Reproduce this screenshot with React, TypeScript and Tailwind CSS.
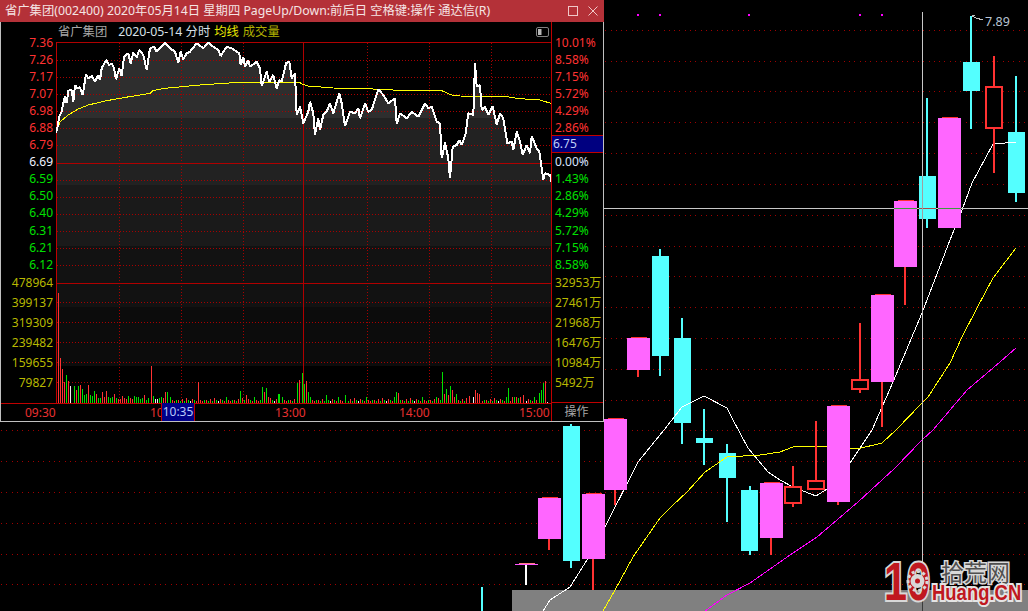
import React from "react";

type C = [number, number, number, number, number, number, number];
// xL, xR, bodyTop, bodyBottom, wickX, wickTop, wickBottom
const cyan: C[] = [
  [563, 580, 426, 561, 570, 424, 568],
  [652, 669, 256, 356, 659, 249, 376],
  [674, 691, 338, 423, 681, 318, 444],
  [696, 713, 438, 443, 703, 409, 465],
  [719, 736, 453, 478, 726, 444, 522],
  [741, 758, 490, 551, 749, 486, 555],
  [919, 936, 176, 219, 926, 98, 228],
  [963, 980, 62, 91, 970, 16, 129],
  [1008, 1025, 132, 193, 1015, 76, 202],
];
const pink: C[] = [
  [538, 561, 498, 539, 548, 497, 550],
  [582, 605, 494, 559, 592, 493, 590],
  [604, 627, 419, 490, 614, 418, 505],
  [627, 650, 338, 370, 637, 337, 377],
  [760, 783, 483, 538, 770, 482, 555],
  [827, 850, 406, 502, 837, 405, 505],
  [871, 894, 295, 382, 881, 294, 427],
  [894, 917, 201, 267, 904, 200, 305],
  [938, 961, 118, 228, 948, 117, 228],
];
const hollow: C[] = [
  [785, 801, 487, 503, 792, 466, 507],
  [808, 824, 481, 489, 815, 421, 490],
  [852, 868, 380, 389, 859, 323, 393],
  [986, 1002, 87, 128, 993, 56, 173],
];
const gridYs = [30, 61, 91, 122, 153, 184, 215, 246, 276, 307, 338, 369, 400, 430, 461, 492, 523, 554, 584];
const maWhite = "543,611 550,600 570,587 587,560 605,527 638,462 664,430 682,407 704,396 727,408 733,420 748,448 768,472 780,480 793,487 816,496 827,489 850,463 872,430 893,382 922,313 950,240 962,210 972,183 993,144 1005,143 1016,142";
const maYellow = "603,611 615,590 633,557 660,518 672,506 687,492 705,472 727,457 760,455 780,452 793,447 817,446 850,448 857,449 882,443 896,430 922,403 928,397 950,363 962,337 977,308 993,278 1016,248";
const maPurple = "705,611 727,595 750,583 780,562 793,553 817,537 858,502 895,468 922,440 933,430 967,390 993,368 1016,348";

const priceLeft: [number, number][] = [[168,398],[172,385],[178,350],[185,335],[190,310],[195,290],[200,310],[205,272],[215,270],[220,305],[225,255],[232,265],[240,262],[248,285],[258,222],[265,235],[275,228],[285,245],[295,225],[300,240],[305,205],[318,180],[328,195],[335,190],[342,205],[348,238],[358,205],[365,228],[372,170],[385,160],[392,190],[400,158],[410,172],[418,150],[430,165],[440,210],[450,145],[462,140],[470,155],[480,145],[495,128],[510,145],[525,155],[535,188],[542,155],[550,178],[560,160],[570,155],[590,130],[610,145],[625,128],[640,140],[655,150],[662,168],[680,140],[695,145],[718,160],[722,195],[730,172],[735,200],[745,180],[750,200],[770,185],[780,205],[785,258],[800,215],[808,245],[820,225],[830,265],[838,240],[845,245],[858,190],[868,185],[875,235],[885,220],[890,345],[900,320]];
const priceRight: [number, number][] = [[10,370],[25,335],[30,305],[40,340],[45,405],[55,355],[60,390],[70,345],[80,335],[90,310],[100,340],[118,280],[125,310],[135,378],[150,335],[165,340],[175,325],[180,355],[195,310],[205,335],[215,330],[235,268],[250,285],[265,310],[285,295],[290,372],[300,340],[320,355],[335,335],[355,350],[375,310],[385,325],[395,320],[410,365],[420,370],[425,475],[435,428],[445,475],[450,535],[458,440],[470,435],[478,420],[485,435],[497,400],[505,340],[520,345],[525,190],[530,260],[540,255],[545,330],[555,320],[565,345],[578,318],[590,375],[600,340],[610,355],[622,430],[635,425],[640,450],[650,395],[660,425],[668,465],[680,435],[690,460],[695,408],[710,445],[718,455],[730,540],[735,520],[750,525],[755,548]];
const pricePts = [
  ...priceLeft.map(([x, y]) => [x / 3, y / 3]),
  ...priceRight.map(([x, y]) => [300 + x / 3, y / 3]),
].map(([x, y]) => `${x.toFixed(1)},${y.toFixed(1)}`).join(" ");
const avgPts = [
  ...[[168,398],[180,365],[205,345],[235,327],[265,315],[320,302],[370,293],[450,280],[458,272],[495,265],[600,255],[718,247],[900,247]].map(([x, y]) => [x / 3, y / 3]),
  ...[[0,250],[25,258],[100,264],[200,266],[320,272],[425,272],[455,285],[480,288],[620,290],[660,296],[720,300],[752,310]].map(([x, y]) => [300 + x / 3, y / 3]),
].map(([x, y]) => `${x.toFixed(1)},${y.toFixed(1)}`).join(" ");

const RED = "#ff3232";
const GREEN = "#00e000";
const WHITE = "#f0f0f0";
const colorOf: Record<string, string> = { r: RED, g: GREEN, w: WHITE };

const earlyH = [110,45,34,21,28,22,17,0,17,13,17,18,14,8,9,18,8,7,12,9,5,5,11,6,12,6,5,6,9,5,4,4,7,5,4,7,5,4,7,6,6,4,5,8,3,5];
const earlyC = "rrrrgrwggrgrgggrgggrggrrrgggrgrrrrrgrrgggggrgg";
const spikes: [number, number, string][] = [
  [151,37,"r"],[153,7,"g"],[155,4,"w"],[157,4,"w"],[159,5,"g"],[161,6,"g"],[163,5,"r"],[165,11,"r"],[167,11,"g"],[198,21,"r"],
  [240,12,"g"],[246,8,"r"],[262,16,"g"],[264,11,"r"],[266,15,"g"],[268,6,"r"],[278,9,"g"],[279,9,"g"],[297,20,"g"],[299,23,"r"],
  [302,30,"g"],[304,19,"g"],[306,22,"r"],[308,11,"g"],[326,8,"g"],[345,8,"g"],[396,11,"g"],[398,10,"r"],[436,6,"g"],[442,31,"g"],
  [444,9,"r"],[446,14,"g"],[448,8,"r"],[450,17,"g"],[452,13,"r"],[454,6,"r"],[456,9,"g"],[469,7,"r"],[473,6,"w"],[475,13,"r"],[477,10,"r"],[479,9,"r"],
  [508,15,"g"],[512,6,"r"],[514,6,"g"],[516,6,"r"],[518,5,"g"],[520,6,"r"],[523,8,"r"],[539,10,"g"],[541,13,"g"],[543,20,"g"],[545,22,"r"],[547,1,"w"],[551,31,"w"],
];
const bars: { x: number; h: number; c: string }[] = [];
earlyH.forEach((h, i) => bars.push({ x: 58 + i * 2, h, c: colorOf[earlyC[i]] }));
const lowPat = [3, 2, 4, 2, 5, 3, 2, 4, 3, 2, 6, 3, 2, 3];
const colPat = "rgrgrgwrgrgrrg";
for (let x = 150, i = 0; x < 550; x += 2, i++) {
  if (spikes.some(([sx]) => Math.abs(sx - x) < 2)) continue;
  bars.push({ x, h: lowPat[i % 14], c: colorOf[colPat[i % 14]] });
}
spikes.forEach(([x, h, c]) => bars.push({ x, h, c: colorOf[c] }));

const hGrid = [60, 77, 94, 111, 128, 145, 180, 197, 214, 231, 248, 265, 302, 322, 342, 362, 382];
const vGrid = [119, 181, 243, 367, 429, 491];
const bands: [number, number, string][] = [
  [42, 76, "#2e2e2e"],
  [118, 67, "#222222"],
  [185, 61, "#1a1a1a"],
  [246, 61, "#121212"],
  [307, 59, "#0c0c0c"],
];

const priceLabels: [string, string][] = [
  ["7.36", RED],["7.26", RED],["7.17", RED],["7.07", RED],["6.98", RED],["6.88", RED],["6.79", RED],
  ["6.69", "#eef2ff"],
  ["6.59", GREEN],["6.50", GREEN],["6.40", GREEN],["6.31", GREEN],["6.21", GREEN],["6.12", GREEN],
];
const pctLabels: [string, string][] = [
  ["10.01%", RED],["8.58%", RED],["7.15%", RED],["5.72%", RED],["4.29%", RED],["2.86%", RED],["", RED],
  ["0.00%", "#d8e4ff"],
  ["1.43%", GREEN],["2.86%", GREEN],["4.29%", GREEN],["5.72%", GREEN],["7.15%", GREEN],["8.58%", GREEN],
];
const volLeft = ["478964", "399137", "319309", "239482", "159655", "79827"];
const volRight = ["32953万", "27461万", "21968万", "16476万", "10984万", "5492万"];

function Chart() {
  return (
    <svg className="absolute inset-0" width={1028} height={611} viewBox="0 0 1028 611">
      <g shapeRendering="crispEdges">
        {gridYs.map((y) => (
          <line key={y} x1={1} x2={1028} y1={y + 0.5} y2={y + 0.5} stroke="#a00000" strokeDasharray="1 4.3" />
        ))}
        {[638, 660, 749, 860, 882].map((x) => (
          <rect key={x} x={x - 1} y={14} width={2} height={2} fill="#ff00ff" />
        ))}
        <rect x={512} y={590} width={516} height={21} fill="#808080" />
        <rect x={481} y={587} width={2} height={24} fill="#54ffff" />
        {cyan.map(([l, r, t, b, wx, wt, wb]) => (
          <g key={l}>
            <rect x={wx} y={wt} width={2} height={wb - wt} fill="#54ffff" />
            <rect x={l} y={t} width={r - l} height={b - t} fill="#54ffff" />
          </g>
        ))}
        <rect x={525} y={564} width={2} height={21} fill="#ffffff" />
        <g fill="none" strokeWidth={1}>
          <polyline points={maWhite} stroke="#ffffff" />
          <polyline points={maYellow} stroke="#ffff00" />
          <polyline points={maPurple} stroke="#ff00ff" />
        </g>
        <rect x={515} y={564} width={23} height={1} fill="#ff54ff" />
        <rect x={519} y={563} width={16} height={1} fill="#ff8080" />
        {pink.map(([l, r, t, b, wx, wt, wb]) => (
          <g key={l}>
            <rect x={wx} y={wt} width={2} height={wb - wt} fill="#ff3232" />
            <rect x={l + 4} y={t - 1} width={r - l - 7} height={1} fill="#ff3232" />
            <rect x={l} y={t} width={r - l} height={b - t} fill="#ff66ff" />
          </g>
        ))}
        {hollow.map(([l, r, t, b, wx, wt, wb]) => (
          <g key={l}>
            <rect x={wx} y={wt} width={2} height={t - wt} fill="#ff3232" />
            <rect x={wx} y={b} width={2} height={wb - b} fill="#ff3232" />
            <rect x={l} y={t} width={r - l} height={b - t} fill="#000" stroke="#ff3232" strokeWidth={2} />
          </g>
        ))}
        <rect x={603} y={208} width={425} height={1} fill="#c8c8c8" />
        <rect x={894} y={208} width={23} height={1} fill="#3f9a3f" />
        <rect x={938} y={208} width={23} height={1} fill="#3f9a3f" />
        <rect x={919} y={208} width={17} height={1} fill="#a84a4a" />
        <rect x={922} y={12} width={1} height={578} fill="#c8c8c8" />
        <rect x={922} y={176} width={1} height={43} fill="#a0a0a0" />
        <rect x={922} y={590} width={1} height={21} fill="#3a3a3a" />
        <polyline points="972,16 976,18 983,20" fill="none" stroke="#c0c0c0" strokeWidth={1} />
        <polyline points="972,15 975,15" fill="none" stroke="#c0c0c0" strokeWidth={1} />
      </g>
      <text x={985} y={26} fontSize={12.5} fill="#b8c4d4" fontFamily="'Noto Sans', sans-serif">7.89</text>
    </svg>
  );
}

function Plot() {
  return (
    <svg width={495} height={361} viewBox="56 42 495 361" className="block shrink-0">
      <defs>
        <clipPath id="under">
          <polygon points={`${pricePts} 551,182 551,403 56,403`} />
        </clipPath>
      </defs>
      <g clipPath="url(#under)" shapeRendering="crispEdges">
        {bands.map(([y, h, c]) => (
          <rect key={y} x={56} y={y} width={495} height={h} fill={c} />
        ))}
      </g>
      <g shapeRendering="crispEdges">
        {hGrid.map((y) => (
          <line key={y} x1={57} x2={551} y1={y + 0.5} y2={y + 0.5} stroke="#a80000" strokeDasharray="1 2" />
        ))}
        {vGrid.map((x) => (
          <line key={x} x1={x + 0.5} x2={x + 0.5} y1={43} y2={403} stroke="#a80000" strokeDasharray="1 2" />
        ))}
        <rect x={56} y={42} width={495} height={1} fill="#b00000" />
        <rect x={56} y={163} width={495} height={1} fill="#b00000" />
        <rect x={56} y={283} width={495} height={1} fill="#b00000" />
        <rect x={56} y={42} width={1} height={361} fill="#c00000" />
        <rect x={303} y={42} width={1} height={361} fill="#b00000" />
        {bars.map((b, i) => (
          <rect key={i} x={b.x} y={403 - b.h} width={1} height={b.h} fill={b.c} />
        ))}
        <polyline points={avgPts} fill="none" stroke="#ffff00" strokeWidth={1} />
        <polyline points={pricePts} fill="none" stroke="#ffffff" strokeWidth={2} strokeLinejoin="bevel" />
      </g>
    </svg>
  );
}

function Watermark() {
  return (
    <svg className="absolute left-[880px] top-[550px]" width={148} height={61} viewBox="880 550 148 61">
      <text transform="translate(884,600) scale(0.78,1)" fontFamily="'Liberation Sans', sans-serif" fontWeight={700} fontSize={53} fill="#c01820" stroke="#d8d8d8" strokeWidth={4} paintOrder="stroke">10</text>
      <circle cx={917.5} cy={581} r={7} fill="#d8d8d8" />
      <circle cx={917.5} cy={581} r={9.5} fill="none" stroke="#d8d8d8" strokeWidth={3} strokeDasharray="3 2.5" />
      <circle cx={917.5} cy={581} r={2.5} fill="#c01820" />
      <text x={941} y={581} fontSize={23} fontWeight={400} fill="#505050" stroke="#d8d8d8" strokeWidth={3} paintOrder="stroke" fontFamily="'Noto Sans CJK SC', sans-serif">拾荒网</text>
      <text transform="translate(932,600) scale(0.84,1)" fontSize={22} fontWeight={700} fill="#c01820" stroke="#e4e4e4" strokeWidth={4} paintOrder="stroke" fontFamily="'Liberation Sans', sans-serif">Huang.CN</text>
    </svg>
  );
}

function Popup() {
  return (
    <div className="absolute left-0 top-0 flex h-[422px] w-[604px] flex-col border-b border-l border-r border-[#c0c0c0] border-t-0 bg-black">
      <div className="relative -mx-px flex h-[22px] shrink-0 items-center justify-between bg-[#b43138] pl-[5px] pr-[6px] text-[12.3px] text-[#f4e4e4]">
        <span className="whitespace-nowrap">省广集团(002400) 2020年05月14日 星期四 PageUp/Down:前后日 空格键:操作 通达信(R)</span>
        <div className="flex items-center gap-[10px]">
          <svg width={10} height={10} viewBox="0 0 10 10">
            <rect x={0.5} y={0.5} width={9} height={9} fill="none" stroke="#f0c8c8" />
          </svg>
          <svg width={10} height={10} viewBox="0 0 10 10">
            <path d="M0.5 0.5L9.5 9.5M9.5 0.5L0.5 9.5" fill="none" stroke="#f0c8c8" />
          </svg>
        </div>
      </div>
      <div className="flex min-h-0 flex-1">
        <div className="relative flex w-[550px] shrink-0 flex-col">
          <div className="flex h-[20px] shrink-0 items-center gap-[4px] pl-[57px] text-[12.3px] leading-none">
            <span className="mr-[7px] text-[#a8a8a8]">省广集团</span>
            <span className="text-[#d8e0e8]">2020-05-14 分时</span>
            <span className="text-[#e8e800]">均线</span>
            <span className="text-[#b0b000]">成交量</span>
          </div>
          <div className="flex h-[361px] shrink-0">
            <div className="-mt-[8px] flex w-[55px] shrink-0 flex-col pr-[3px] text-right text-[12px] leading-none">
              {priceLabels.map(([t, c]) => (
                <div key={t} className="flex h-[17.1px] items-center justify-end" style={{ color: c }}>{t}</div>
              ))}
              {volLeft.map((t) => (
                <div key={t} className="flex h-[20px] items-center justify-end text-[#b8b800]">{t}</div>
              ))}
            </div>
            <Plot />
          </div>
          <div className="relative flex h-[18px] shrink-0 items-center border-t border-[#c00000] pl-[24px] text-[12px] leading-none text-[#e83030]">
            <span className="w-[125px] shrink-0">09:30</span>
            <span className="w-[125px] shrink-0">10:30</span>
            <span className="w-[124px] shrink-0">13:00</span>
            <span className="w-[120px] shrink-0">14:00</span>
            <span className="shrink-0">15:00</span>
            <div className="absolute -top-px left-[160px] flex h-[18px] w-[34px] items-center justify-center border-x border-[#c00000] bg-[#000088] text-[#b8c8f8]">10:35</div>
          </div>
        </div>
        <div className="relative flex w-[52px] shrink-0 flex-col border-l border-[#c00000]">
          <div className="-mt-px h-[13px] shrink-0" />
          <div className="flex h-[368px] shrink-0 flex-col pl-[3px] text-[12px] leading-none">
            {pctLabels.map(([t, c], i) => (
              <div key={i} className="flex h-[17.1px] items-center" style={{ color: c }}>{t}</div>
            ))}
            {volRight.map((t) => (
              <div key={t} className="flex h-[20px] items-center whitespace-nowrap text-[#b8b800]">{t}</div>
            ))}
          </div>
          <div className="flex h-[18px] shrink-0 items-center justify-center border-t border-[#c00000] pr-[2px] text-[12px] leading-none text-[#a8a8a8]">操作</div>
          <div className="absolute left-0 top-[113px] flex h-[18px] w-full items-center border-y border-[#c00000] bg-[#000080] pl-[1px] text-[12px] leading-none text-[#c0d0f8]">6.75</div>
          <svg className="absolute -left-[16px] top-[5px]" width={13} height={10} viewBox="0 0 13 10">
            <rect x={0.5} y={0.5} width={12} height={9} rx={1.5} fill="none" stroke="#808080" />
            <rect x={2} y={2} width={3.5} height={6} fill="#b8b8b8" />
          </svg>
        </div>
      </div>
    </div>
  );
}

export default function App() {
  return (
    <div className="relative h-[611px] w-[1028px] overflow-hidden bg-black font-['Noto_Sans','Noto_Sans_CJK_SC',sans-serif]">
      <Chart />
      <Popup />
      <Watermark />
    </div>
  );
}
